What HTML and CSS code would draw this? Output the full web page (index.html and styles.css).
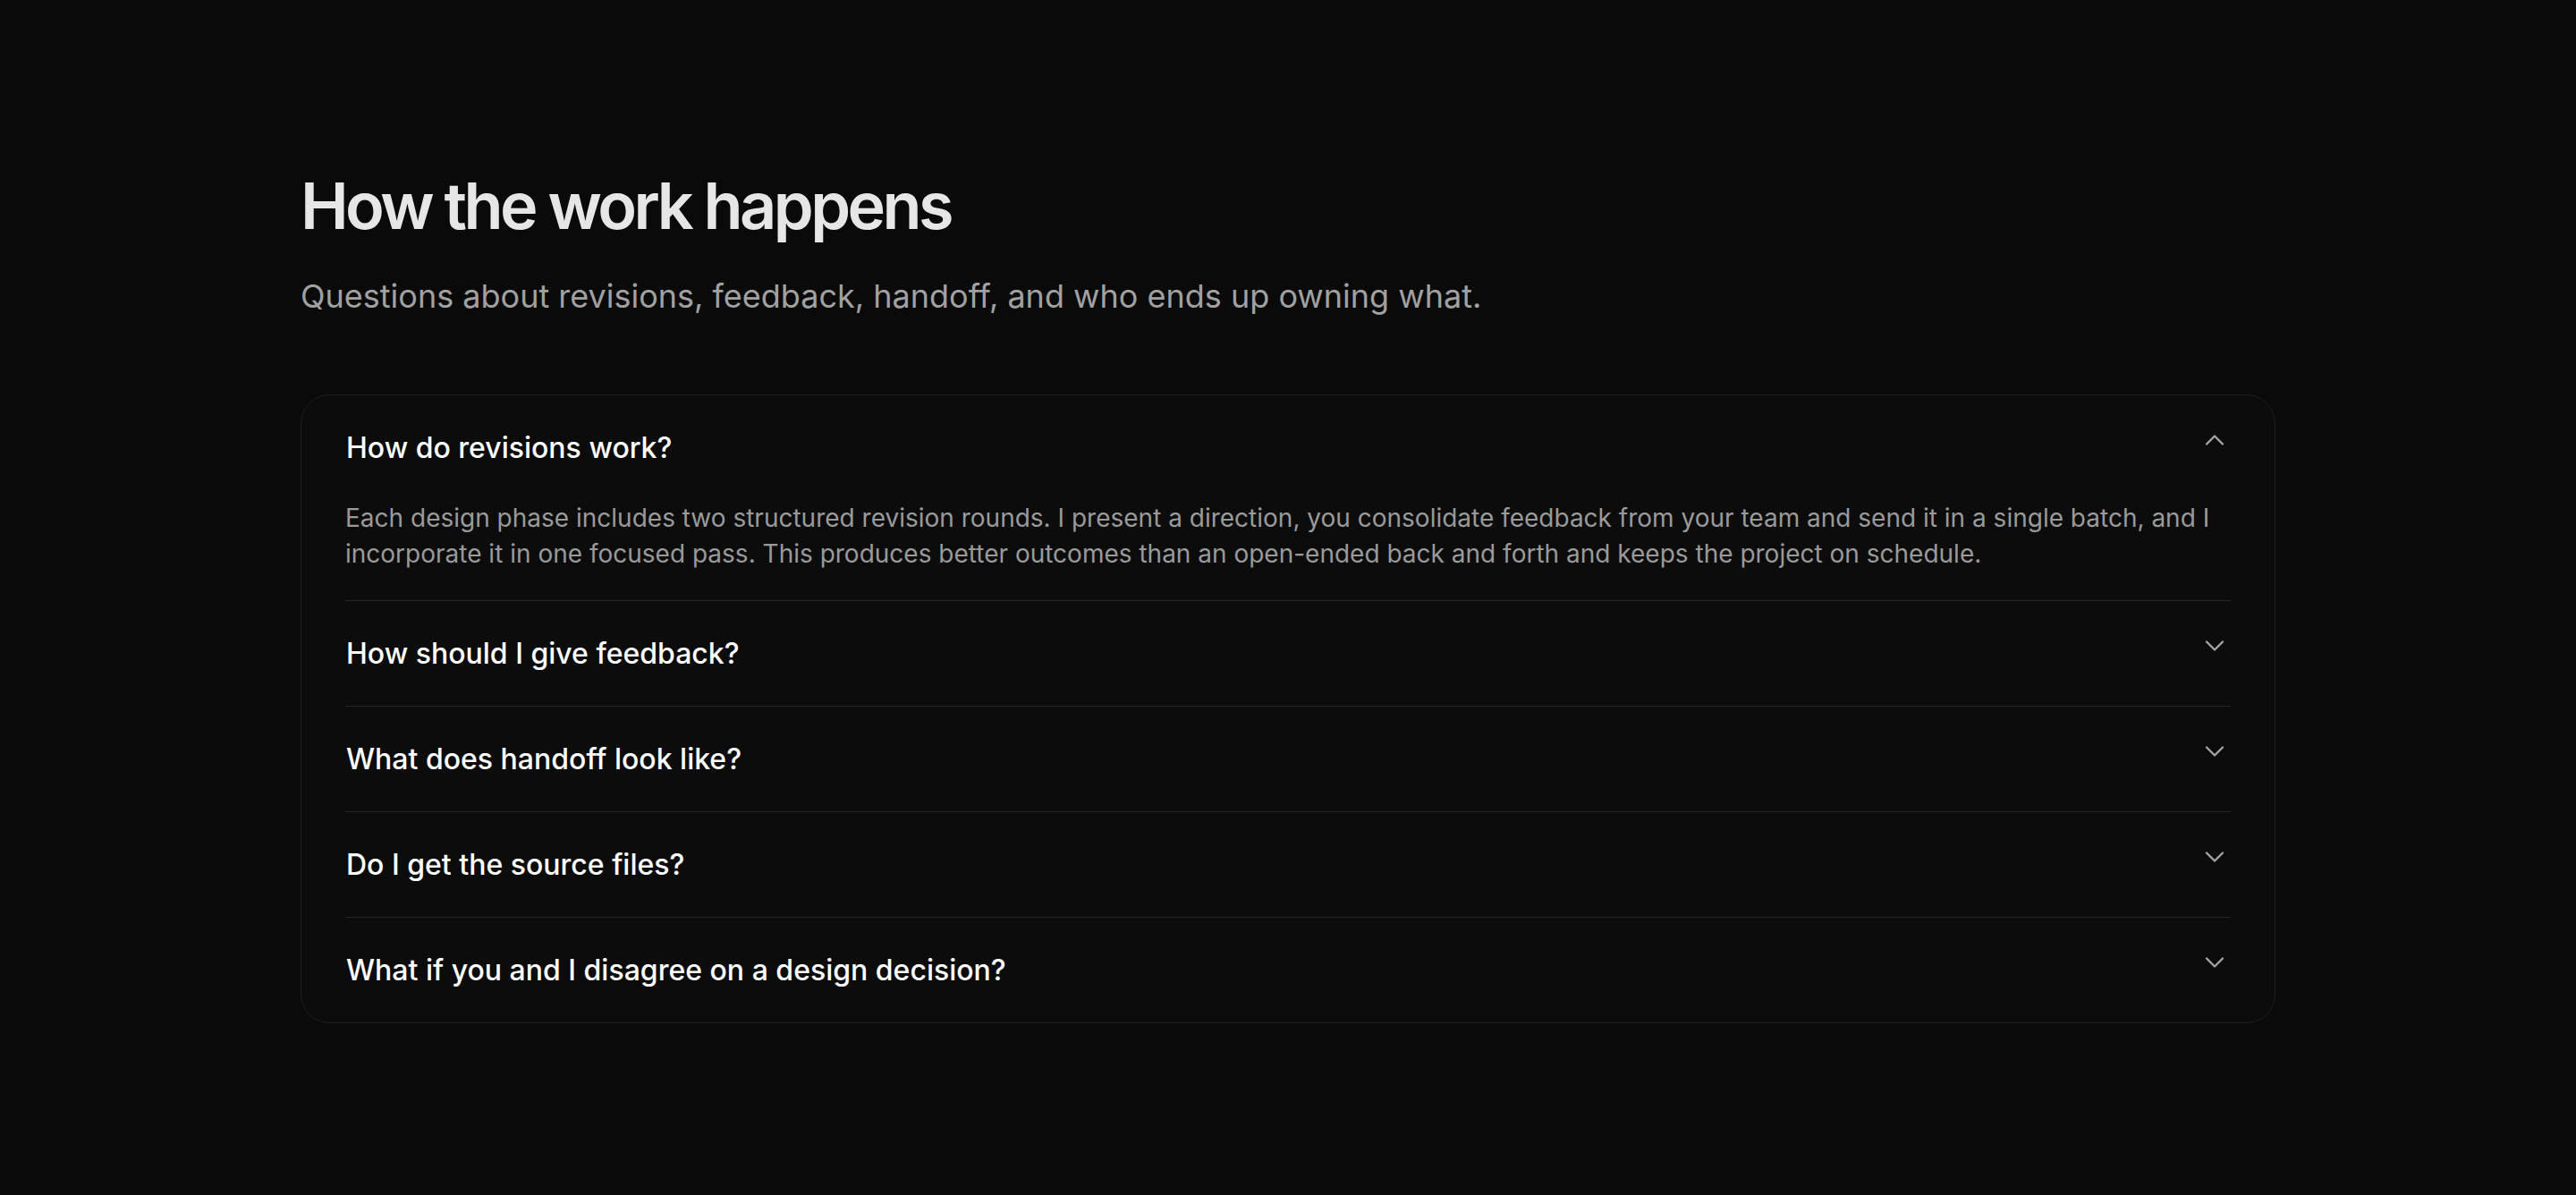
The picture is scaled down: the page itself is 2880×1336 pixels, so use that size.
FILE: index.html
```html
<!DOCTYPE html>
<html lang="en">
<head>
    <meta charset="UTF-8">
    <meta name="viewport" content="width=device-width, initial-scale=1.0">
    <title>How the work happens</title>
    <link rel="stylesheet" href="styles.css">
</head>
<body>
    <section class="faq">
        <h2 class="faq-title">How the work happens</h2>
        <p class="faq-lead">Questions about revisions, feedback, handoff, and who ends up owning what.</p>

        <div class="faq-card">
            <div class="faq-item open">
                <button class="faq-question">
                    <span>How do revisions work?</span>
                    <svg class="chev" viewBox="0 0 24 24"><path d="m6 15 6-6 6 6"/></svg>
                </button>
                <p class="faq-answer">Each design phase includes two structured revision rounds. I present a direction, you consolidate feedback from your team and send it in a single batch, and I incorporate it in one focused pass. This produces better outcomes than an open-ended back and forth and keeps the project on schedule.</p>
            </div>
            <div class="faq-item">
                <button class="faq-question">
                    <span>How should I give feedback?</span>
                    <svg class="chev" viewBox="0 0 24 24"><path d="m6 9 6 6 6-6"/></svg>
                </button>
            </div>
            <div class="faq-item">
                <button class="faq-question">
                    <span>What does handoff look like?</span>
                    <svg class="chev" viewBox="0 0 24 24"><path d="m6 9 6 6 6-6"/></svg>
                </button>
            </div>
            <div class="faq-item">
                <button class="faq-question">
                    <span>Do I get the source files?</span>
                    <svg class="chev" viewBox="0 0 24 24"><path d="m6 9 6 6 6-6"/></svg>
                </button>
            </div>
            <div class="faq-item">
                <button class="faq-question">
                    <span>What if you and I disagree on a design decision?</span>
                    <svg class="chev" viewBox="0 0 24 24"><path d="m6 9 6 6 6-6"/></svg>
                </button>
            </div>
        </div>
    </section>
</body>
</html>
```

FILE: styles.css
```css
body { margin: 0; background: #0a0a0a; font-family: Inter, "Noto Sans", sans-serif; }
.faq { width: 2208px; margin: 0 auto; padding: 190px 0 200px; }
.faq-title { margin: 0; font-size: 72px; line-height: 1.1; font-weight: 600; letter-spacing: -0.05em; color: #e6e6e6; }
.faq-lead { margin: 35px 0 83px; font-size: 36px; line-height: 1.5; color: #a1a1a1; }
.faq-card { background: #0c0c0c; border: 1px solid #1f1f1f; border-radius: 32px; padding: 0 49px; }
.faq-item { border-bottom: 1px solid #262626; }
.faq-item:last-child { border-bottom: none; }
.faq-question { display: flex; justify-content: space-between; align-items: flex-start; width: 100%; padding: 36px 0 36px 1px; background: none; border: none; cursor: pointer; font-family: inherit; font-size: 32px; line-height: 45px; font-weight: 500; color: #fff; text-align: left; }
.chev { width: 36px; height: 36px; margin-top: -4px; fill: none; stroke: #a3a3a3; stroke-width: 1.6; stroke-linecap: round; stroke-linejoin: round; }
.faq-answer { margin: 0; padding: 0 0 32px; font-size: 28px; line-height: 40px; color: #9a9a9a; }
```
